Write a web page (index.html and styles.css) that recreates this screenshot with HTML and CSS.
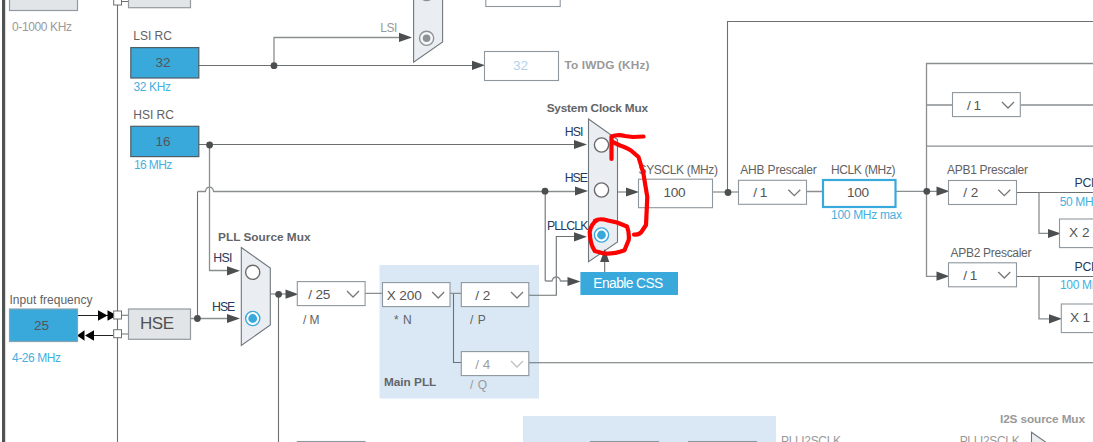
FILE: index.html
```
<!DOCTYPE html>
<html lang="en">
<head>
<meta charset="utf-8">
<title>Clock Configuration</title>
<link rel="stylesheet" href="styles.css">
</head>
<body>
<svg class="diagram" width="1093" height="442" viewBox="0 0 1093 442">
<defs>
<path id="arrow" d="M0 0L-13 -4.6V4.6Z"/>
<path id="chev" d="M0 0L6 6L12 0"/>
<circle id="dot" r="3.4"/>
</defs>

<!-- PLL panels -->
<g class="panel">
<rect x="379.5" y="265" width="159.5" height="133.5"/>
<rect x="523" y="416" width="253" height="30"/>
</g>

<!-- Wires -->
<rect class="edge" x="2" y="0" width="3.2" height="442"/>
<g class="wire">
<path d="M117.5 0V442M122 1.5H128M121 315.3H128M121 334H128"/>
<path d="M199 65.5H475M199 144.5H576M197.5 318.5V191.5M545.2 191.5V281"/>
<path d="M278.5 294V442M617.5 192H628M712.5 192H739M270.5 294H288"/>
<path d="M727.5 192V21.5H1093M1016.5 192.5H1093M1016.5 276.5H1093M529 362.7H1093M604.7 272V260"/>
<path d="M453.5 293V362.5H461.5M529 295.3H556.3V236.5H576"/>
</g>
<g class="wire light">
<path d="M274 65.5V37.5H400M209.5 145V270.5H228"/>
<path d="M197.5 191.5H205.5Q206 187.2 209.5 187.2T213.5 191.5H576M545.2 281H552Q553 277 556.3 277T560.5 281H568"/>
<path d="M190 318.5H228M365 293.3H382M450 293.3H461M806.5 191.5H822M896 191.3H938"/>
<path d="M1093 63.5H926.5V276.3H938M926.5 105H952M1020.5 105H1093M926.5 146.2H1093"/>
<path d="M1039 192.5V233.3H1050M1039 276.5V318.8H1050"/>
</g>
<g class="black"><path d="M78 315.5H114M86 335.5H113"/>
<path class="tip" d="M107.5 315.5L98 310.2V320.8ZM117 315.5L107.5 310.2V320.8ZM77 335.5L84.5 330.2V340.8ZM85 335.5L94 330.2V340.8Z"/></g>
<g class="open">
<rect x="113.7" y="-3" width="7.8" height="8"/>
<rect x="113.7" y="311" width="7.8" height="8"/>
<rect x="113.7" y="329.7" width="7.8" height="8"/>
</g>

<!-- Multiplexers -->
<g class="mux">
<path d="M413.6 -5V62.3L442.6 42V-5Z"/>
<path d="M588.5 119L617.5 139.5V242L588.5 261.8Z"/>
<path d="M241.3 247.5L270.3 268V325L241.3 345.5Z"/>
<path d="M1031.5 432.2L1060.5 452.5H1031.5Z"/>
</g>
<g class="radio">
<circle cx="601.5" cy="145" r="7.1"/><circle cx="601.5" cy="190" r="7.1"/><circle cx="252.7" cy="272.3" r="7.1"/>
<circle class="dim" cx="426.6" cy="38.3" r="7.1"/><circle class="dim" cx="426.6" cy="-6.6" r="7.1"/>
<circle class="on" cx="601.5" cy="235" r="7.1"/><circle class="on" cx="252.7" cy="318.5" r="7.1"/>
</g>
<circle class="fill-dim" cx="426.6" cy="38.3" r="3.8"/>
<circle class="fill-on" cx="601.5" cy="235" r="4.4"/>
<circle class="fill-on" cx="252.7" cy="318.5" r="4.4"/>

<g class="mark">
<use href="#dot" x="274" y="65.7"/><use href="#dot" x="209.6" y="145"/><use href="#dot" x="545" y="191.2"/>
<use href="#dot" x="728" y="192.5"/><use href="#dot" x="926.8" y="191.3"/><use href="#dot" x="197.4" y="318.5"/><use href="#dot" x="278.6" y="294.3"/>
<use href="#arrow" x="412" y="37.4"/><use href="#arrow" x="485" y="65.3"/><use href="#arrow" x="587" y="144.5"/>
<use href="#arrow" x="588" y="191"/><use href="#arrow" x="587" y="236.8"/><use href="#arrow" x="580.5" y="281.5"/>
<use href="#arrow" x="639" y="192"/><use href="#arrow" x="949.5" y="191.2"/><use href="#arrow" x="949.5" y="276.2"/>
<use href="#arrow" x="1061" y="233.5"/><use href="#arrow" x="1062" y="318.8"/><use href="#arrow" x="240" y="270.8"/>
<use href="#arrow" x="240" y="318.5"/><use href="#arrow" x="298.5" y="294.2"/>
<use href="#arrow" transform="translate(604.7 249) rotate(-90)"/>
</g>

<!-- Sources and values -->
<g class="grey"><rect x="9.5" y="-9" width="68" height="19.5"/><rect x="128.5" y="-9" width="62" height="16.7"/><rect x="128.5" y="309" width="62" height="30.3"/></g>
<g class="source"><rect x="130.8" y="47.6" width="68" height="30.4"/><rect x="130.8" y="126.3" width="68" height="30.3"/><rect class="soft" x="9.5" y="309" width="68" height="32.5"/></g>
<g class="box">
<rect x="484.5" y="51.5" width="74" height="29"/><rect x="485.8" y="-9" width="74.4" height="15.5"/>
<rect x="638.5" y="179.2" width="74" height="28.5"/>
<rect x="738.5" y="180.3" width="68" height="24"/><rect x="952.5" y="92.6" width="67.8" height="24"/>
<rect x="948.5" y="180.5" width="68" height="24"/><rect x="948.5" y="262.8" width="68" height="24"/>
<rect x="1059.5" y="219" width="60" height="28.6"/><rect x="1061.3" y="304" width="60" height="28.6"/>
<rect x="297.3" y="281.6" width="67.8" height="24"/><rect x="382.5" y="282.6" width="67.5" height="24"/>
<rect x="461.3" y="282.6" width="67.5" height="24"/><rect x="461.3" y="351.6" width="67.5" height="24"/>
<rect x="297.3" y="441.5" width="67.8" height="24"/><rect x="590.5" y="441.5" width="68" height="24"/><rect x="688.5" y="441.5" width="68" height="24"/>
</g>
<rect class="active" x="823" y="180" width="72.5" height="27"/>
<rect class="button" x="580.4" y="272" width="97.6" height="23"/>
<g class="chevrons">
<use href="#chev" x="788.3" y="189.7"/><use href="#chev" x="1002" y="102"/><use href="#chev" x="998.3" y="189.7"/><use href="#chev" x="998.3" y="272"/>
<use href="#chev" x="347" y="291"/><use href="#chev" x="432.2" y="292"/><use href="#chev" x="511" y="292"/><use class="dim" href="#chev" x="511" y="361"/>
</g>

<!-- Labels -->
<g class="label">
<text x="133.3" y="40" textLength="38.5">LSI RC</text>
<text x="133.3" y="118.6" textLength="40.5">HSI RC</text>
<text x="9.5" y="303.7" textLength="83">Input frequency</text>
<text x="638.5" y="173.6" textLength="79.5">SYSCLK (MHz)</text>
<text x="740.3" y="173.6" textLength="76.5">AHB Prescaler</text>
<text x="831" y="173.6" textLength="64.5">HCLK (MHz)</text>
<text x="947" y="173.6" textLength="81">APB1 Prescaler</text>
<text x="950.5" y="257" textLength="81">APB2 Prescaler</text>
<text x="303" y="324" textLength="16.5">/ M</text>
<text x="394" y="324" textLength="17.7">* N</text>
<text x="470" y="323.7" textLength="15.7">/ P</text>
</g>
<g class="label dim">
<text x="12" y="31.2" textLength="60">0-1000 KHz</text>
<text x="380.3" y="32.4" textLength="17">LSI</text>
<text x="470" y="389.3" textLength="17">/ Q</text>
<text x="781" y="445" textLength="60">PLLI2SCLK</text>
<text x="959.7" y="445" textLength="60">PLLI2SCLK</text>
</g>
<g class="label link">
<text x="133.5" y="91" textLength="37.5">32 KHz</text>
<text x="134" y="168.5" textLength="38.3">16 MHz</text>
<text x="12" y="362.3" textLength="49">4-26 MHz</text>
<text x="831" y="218.5" textLength="71">100 MHz max</text>
<text x="1059.7" y="206" textLength="39.5">50 MHz</text>
<text x="1060" y="288.7" textLength="46">100 MHz</text>
</g>
<g class="label bold">
<text x="546.7" y="112" textLength="101.3">System Clock Mux</text>
<text x="218" y="241" textLength="92.5">PLL Source Mux</text>
<text x="384" y="386" textLength="52.3">Main PLL</text>
<text class="dim" x="564.5" y="68.8" textLength="85">To IWDG (KHz)</text>
<text class="dim" x="1000" y="423.3" textLength="85">I2S source Mux</text>
</g>
<g class="signal">
<text x="564.7" y="136" textLength="18.7">HSI</text>
<text x="564.7" y="182" textLength="23.3">HSE</text>
<text x="547" y="230" textLength="41.5">PLLCLK</text>
<text x="213.3" y="262.3" textLength="19">HSI</text>
<text x="212" y="311.3" textLength="23.3">HSE</text>
<text x="1074.5" y="187" textLength="38">PCLK1</text>
<text x="1074.5" y="270.7" textLength="38">PCLK2</text>
</g>
<g class="value">
<text x="155.5" y="67.2" textLength="15">32</text>
<text x="155.5" y="146.2" textLength="15">16</text>
<text x="34" y="329.9" textLength="15">25</text>
<text class="faint" x="513" y="69.7" textLength="15">32</text>
<text x="663.5" y="197.2" textLength="22">100</text>
<text x="847" y="197.2" textLength="22">100</text>
<text x="753.3" y="197.4" textLength="14">/ 1</text>
<text x="967" y="109.8" textLength="14">/ 1</text>
<text x="963.3" y="197.2" textLength="15">/ 2</text>
<text x="963.3" y="279.7" textLength="14">/ 1</text>
<text x="1069" y="237.4" textLength="20.5">X 2</text>
<text x="1070" y="322.4" textLength="20">X 1</text>
<text x="308.3" y="298.6" textLength="22">/ 25</text>
<text x="386.7" y="299.8" textLength="35">X 200</text>
<text x="475.3" y="299.8" textLength="15">/ 2</text>
<text class="dim" x="475.3" y="368.5" textLength="15">/ 4</text>
</g>
<text class="oscillator" x="140" y="328.7" textLength="34">HSE</text>
<text class="button-text" x="593.3" y="288.4" textLength="70">Enable CSS</text>

<!-- Hand-drawn annotation -->
<g class="pen">
<path d="M595 220.8C598 218.8 603 219 608 220.5L617 222.5L627 226.5Q629.5 233 628.7 240L624.5 250.3Q613 254.5 604 253.5L594.8 251Q590 244 589.7 232Q591 224 597 220.3"/>
<path d="M634 234.6Q640 235 642 231L646 225L647.3 197L643.3 173L638.5 157L631 150.5Q624 146.5 620 145.5L612 141.7"/>
<path d="M611.5 159V136.5Q618 134 625 136L633 137L643.5 136.5"/>
</g>
</svg>
</body>
</html>
```
FILE: styles.css
```
body { margin: 0; background: #fff; overflow: hidden; }
.diagram { display: block; font-family: "Liberation Sans", Arial, sans-serif; }
.panel { fill: #dae8f5; }
.edge { fill: #505252; }
.wire { fill: none; stroke: #6c7072; stroke-width: 1.1; }
.wire.light { stroke: #8a8e91; stroke-width: 1.3; }
.black { fill: none; stroke: #222; stroke-width: 1.2; }
.black .tip { fill: #050505; stroke: none; }
.open { fill: #fff; stroke: #6c7072; }
.mux { fill: #eaeef2; stroke: #6f777d; stroke-width: 1.1; }
.radio { fill: #fff; stroke: #6a6a6a; stroke-width: 1.4; }
.radio .dim { fill: #f4f6f8; stroke: #8d9296; }
.radio .on { stroke: #39a9dc; }
.fill-dim { fill: #8d9296; }
.fill-on { fill: #39a9dc; }
.mark { fill: #4c4f50; }
.grey { fill: #e1e5e8; stroke: #929a9f; stroke-width: 1.2; }
.source { fill: #39a9dc; stroke: #4d5d66; stroke-width: 1.2; }
.source .soft { stroke: #87a2b0; }
.box { fill: #fff; stroke: #8e979e; stroke-width: 1.1; }
.active { fill: #fff; stroke: #39a9dc; stroke-width: 2.2; }
.button { fill: #39a9dc; }
.chevrons { fill: none; stroke: #777; stroke-width: 1.3; }
.chevrons .dim { stroke: #c0c0c0; }
.label { font-size: 12px; fill: #626262; }
.label.dim, .label .dim { fill: #999; }
.label.link { fill: #45b0e0; }
.label.bold { font-size: 11.8px; font-weight: bold; fill: #626567; }
.signal { font-size: 12.3px; fill: #26395c; }
.value { font-size: 13.6px; fill: #555; }
.value .faint { fill: #b5d2ec; }
.value .dim { fill: #a0a0a0; }
.oscillator { font-size: 17px; fill: #505050; }
.button-text { font-size: 13.8px; fill: #fff; }
.pen { fill: none; stroke: #fe0000; stroke-width: 4.2; stroke-linecap: round; stroke-linejoin: round; }
```
